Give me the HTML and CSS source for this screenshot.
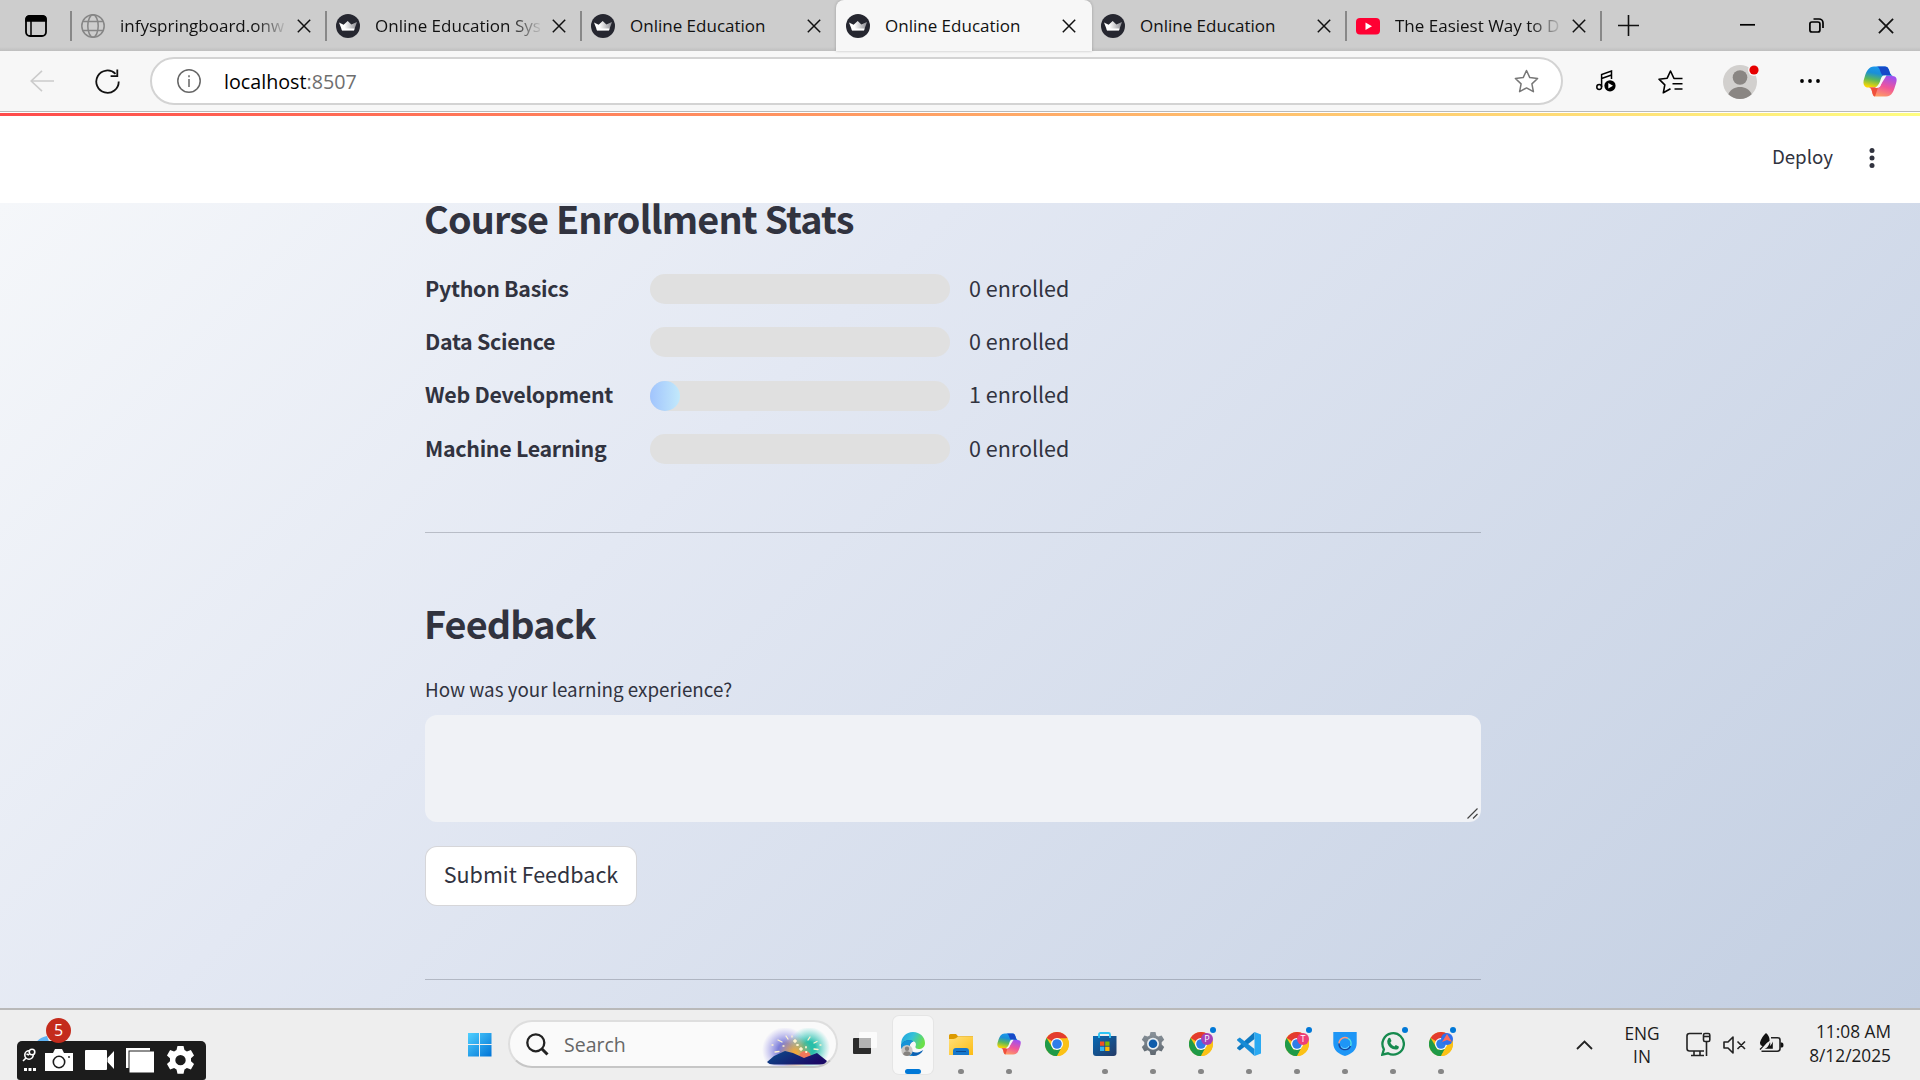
FILE: index.html
```html
<!DOCTYPE html>
<html lang="en">
<head>
<meta charset="utf-8">
<title>Online Education</title>
<link rel="stylesheet" href="styles.css">
</head>
<body>
<svg class="defs" aria-hidden="true">
  <defs>
    <linearGradient id="gBlue" x1="0" y1="0" x2="1" y2="1"><stop offset="0" stop-color="#4fd0ff"/><stop offset="1" stop-color="#0073d6"/></linearGradient>
    <linearGradient id="gCopA" x1="0.6" y1="0" x2="0.3" y2="1"><stop offset="0" stop-color="#1b9af0"/><stop offset=".35" stop-color="#1a8fd8"/><stop offset=".65" stop-color="#5cb85a"/><stop offset="1" stop-color="#ffd800"/></linearGradient>
    <linearGradient id="gCopB" x1="0.7" y1="0" x2="0.3" y2="1"><stop offset="0" stop-color="#a050f0"/><stop offset=".5" stop-color="#f0559a"/><stop offset="1" stop-color="#ffa060"/></linearGradient>
    <linearGradient id="gEdge" x1="0" y1="0" x2="1" y2=".4"><stop offset="0" stop-color="#1d9fe0"/><stop offset=".5" stop-color="#35c1d8"/><stop offset="1" stop-color="#6be04a"/></linearGradient>
    <linearGradient id="gFold" x1="0" y1="0" x2="1" y2="1"><stop offset="0" stop-color="#ffe07a"/><stop offset="1" stop-color="#fdbc14"/></linearGradient>
    <linearGradient id="gStore" x1="0" y1="0" x2="1" y2="1"><stop offset="0" stop-color="#0669b5"/><stop offset="1" stop-color="#243a66"/></linearGradient>
    <linearGradient id="gMount" x1="0" y1="0" x2="1" y2=".4"><stop offset="0" stop-color="#0b4d8c"/><stop offset="1" stop-color="#1a0a66"/></linearGradient>
    <linearGradient id="gGear" x1="0" y1="0" x2="0" y2="1"><stop offset="0" stop-color="#8a939b"/><stop offset="1" stop-color="#5f6870"/></linearGradient>
    <radialGradient id="gGlowA"><stop offset=".3" stop-color="#5b5fd0" stop-opacity=".8"/><stop offset="1" stop-color="#8a80e8" stop-opacity="0"/></radialGradient>
    <radialGradient id="gGlowB"><stop offset=".3" stop-color="#12b8a0" stop-opacity=".9"/><stop offset="1" stop-color="#30c8c0" stop-opacity="0"/></radialGradient>
    <radialGradient id="gGlowC"><stop offset=".1" stop-color="#f0a83c"/><stop offset="1" stop-color="#e8a850" stop-opacity="0"/></radialGradient>
    <linearGradient id="gCrown"><stop offset=".3" stop-color="#fff"/><stop offset="1" stop-color="#8d8d93"/></linearGradient>
  </defs>
  <symbol id="crown" viewBox="0 0 24 24"><circle cx="12" cy="12" r="12" fill="#262730"/><path d="M3 8.4 7.6 10.8 11.7 7 15.4 10.6 21 8 18 16.2H6z" fill="url(#gCrown)"/><path d="M5.6 14.5 18.6 14.5 18 16.4H6z" fill="#fff"/></symbol>
  <symbol id="close" viewBox="0 0 14 14"><path d="M.8.8 13.2 13.2M13.2.8.8 13.2" fill="none" stroke="#111" stroke-width="1.5"/></symbol>
  <symbol id="copilot" viewBox="0 0 34 30"><path d="M11 0H22C25 0 26 3 26.800 6 27.500 8.500 29 9 31 9H22L15 21H9C6 21 4 21.500 2 20 0 18 0 15 1.500 11 3.500 4 6 0 11 0z" fill="url(#gCopA)"/><path d="M17 0H22C25 0 26 3 26.800 6 27.400 8.200 28.500 9 30 9H21C19 9 18 7 17 4 16.500 2 15.500 0 13 0z" fill="#1649c8"/><path d="M8 21H15C16.500 21 17.500 20 18 18L21 9.500H29C33.500 9.500 34.500 12 33 17 30.500 25 29 30 23 30H13C10.500 30 9.500 28 9 25 8.500 22.500 8 21.500 6 21z" fill="url(#gCopB)"/><path d="M8 21H15L12 30C10.500 30 9.500 28 9 25 8.500 22.500 8 21.500 6 21z" fill="#f0503c"/><path d="M20.500 9H23.500L18.500 17C16.500 20.500 15.500 21.500 13.500 21.500H12C14 20 16 18 17 15 18 12 18.500 9.500 20.500 9z" fill="#f7f7f7"/></symbol>
  <symbol id="chrome" viewBox="0 0 24 24"><circle cx="12" cy="12" r="12" fill="#fbc116"/><path d="M12 12 1.600 6A12 12 0 0 1 22.400 6z" fill="#e33b2e"/><path d="M1.600 6 9.500 19 12.500 24A12 12 0 0 1 1.600 6z" fill="#1f9a48"/><path d="M12 12 17 15 12 24A12 12 0 0 1 7 22.900z" fill="#1f9a48"/><path d="M12 6.300H22.500A12 12 0 0 1 12 24L17 15z" fill="#fbc116"/><circle cx="12" cy="12" r="6" fill="#fff"/><circle cx="12" cy="12" r="4.800" fill="#2f7de9"/></symbol>
  <symbol id="gear" viewBox="0 0 24 24"><path fill-rule="evenodd" d="M9.500 0h5l.8 3.400 2 1.100 3.300-1.100 2.600 4.400-2.500 2.400v2.400l2.500 2.300-2.600 4.500-3.300-1.100-2 1.200-.8 3.500h-5l-.8-3.500-2-1.200-3.300 1.100L.8 14.900l2.500-2.300v-2.400L.8 7.800l2.600-4.400 3.300 1.100 2-1.100zM12 7.400a4.300 4.300 0 1 0 0 8.600 4.300 4.300 0 0 0 0-8.600z"/></symbol>
</svg>

<div class="screen">
  <header class="tabstrip">
    <div class="tab-menu"><svg width="22" height="22" viewBox="0 0 22 22"><rect x="1" y="1" width="20" height="20" rx="4" fill="none" stroke="#000" stroke-width="1.800"/><path d="M1 6V4a3 3 0 0 1 3-3h14a3 3 0 0 1 3 3v2z" stroke="#000" stroke-width="1.500"/><path d="M6 6v15" stroke="#000" stroke-width="1.500"/></svg></div>
    <div class="tab"><svg class="fav" viewBox="0 0 24 24" fill="none" stroke="#868686" stroke-width="1.500"><circle cx="12" cy="12" r="11.200"/><ellipse cx="12" cy="12" rx="5.200" ry="11.200"/><path d="M2 7.500h20M2 16.500h20"/></svg><span class="title fade">infyspringboard.onw</span><svg class="x"><use href="#close"/></svg></div>
    <div class="tab"><svg class="fav"><use href="#crown"/></svg><span class="title fade">Online Education Sys</span><svg class="x"><use href="#close"/></svg></div>
    <div class="tab"><svg class="fav"><use href="#crown"/></svg><span class="title">Online Education</span><svg class="x"><use href="#close"/></svg></div>
    <div class="tab active"><svg class="fav"><use href="#crown"/></svg><span class="title">Online Education</span><svg class="x"><use href="#close"/></svg></div>
    <div class="tab first-after"><svg class="fav"><use href="#crown"/></svg><span class="title">Online Education</span><svg class="x"><use href="#close"/></svg></div>
    <div class="tab last-tab"><svg class="fav" viewBox="0 0 24 24"><rect y="4" width="24" height="16.500" rx="4" fill="#ff0033"/><path d="M9.500 8.500 16 12.200 9.500 16z" fill="#fff"/></svg><span class="title fade">The Easiest Way to D</span><svg class="x"><use href="#close"/></svg></div>
    <div class="new-tab"><svg width="21" height="21" viewBox="0 0 21 21"><path d="M10.500 0v21M0 10.500h21" stroke="#111" stroke-width="1.600"/></svg></div>
    <div class="window-controls">
      <svg width="15" height="15" viewBox="0 0 15 15"><path d="M0 6.800h15" stroke="#000" stroke-width="1.700"/></svg>
      <svg width="15" height="15" viewBox="0 0 15 15" fill="none" stroke="#000" stroke-width="1.700"><rect x=".9" y="4" width="10" height="10" rx="2"/><path d="M4.500 1H10a4 4 0 0 1 4 4v5"/></svg>
      <svg width="16" height="16"><use href="#close"/></svg>
    </div>
  </header>

  <div class="toolbar">
    <svg class="back" width="24" height="22" viewBox="0 0 24 22" fill="none" stroke="#cbcbcb" stroke-width="1.600"><path d="M24 11H1M12 .8 1.200 11 12 21.200"/></svg>
    <svg class="reload" width="25" height="25" viewBox="0 0 25 25" fill="none" stroke="#111" stroke-width="1.800"><path d="M20.500 4.800A11.200 11.200 0 1 0 23.700 12.500M22.300 .5V7.200H15.600"/></svg>
    <div class="address">
      <svg width="24" height="24" viewBox="0 0 24 24" fill="none" stroke="#666" stroke-width="1.500"><circle cx="12" cy="12" r="11.200"/><path d="M12 10v8M12 6.200v2"/></svg>
      <span class="url">localhost<span class="port">:8507</span></span>
      <svg class="star" width="25" height="25" viewBox="0 0 25 25" fill="none" stroke="#777" stroke-width="1.500" stroke-linejoin="round"><path d="M12.500 1.500 15.800 8.600 23.600 9.500 17.900 14.900 19.400 22.700 12.500 18.900 5.600 22.700 7.100 14.900 1.400 9.500 9.200 8.600z"/></svg>
    </div>
    <div class="tools">
      <svg width="20" height="22" viewBox="0 0 20 22" fill="none" stroke="#000" stroke-width="1.500"><circle cx="3.200" cy="17" r="2.400"/><path d="M5.600 17V4.500L15.500 1v8M5.600 8.500 15.500 5"/><circle cx="14" cy="15.800" r="5.600" fill="#000" stroke="none"/><path d="M12.300 13 17 15.800 12.300 18.600z" fill="#fff" stroke="none"/></svg>
      <svg width="25" height="25" viewBox="0 0 25 25" fill="none" stroke="#000" stroke-width="1.600" stroke-linejoin="round"><path d="M24.500 9.500H16L12.500 2 9.200 9.200 1 10.200 6.800 15.800 5.300 23.800 12.500 19.800M14.500 14.800H24.500M16.500 20H24.500"/></svg>
      <svg class="avatar" width="36" height="36" viewBox="0 0 36 36"><circle cx="17" cy="19" r="17" fill="#d2d0ce"/><circle cx="17" cy="14.500" r="7.300" fill="#8a8683"/><path d="M5.300 31.300C7.500 26 12 24 17 24s9.500 2 11.700 7.300A17 17 0 0 1 5.300 31.300z" fill="#8a8683"/><circle cx="31" cy="7" r="6" fill="#f7f7f7"/><circle cx="31" cy="7" r="4.600" fill="#e60000"/></svg>
      <svg class="more" width="20" height="4" viewBox="0 0 20 4" fill="#000"><circle cx="2" cy="2" r="1.900"/><circle cx="10" cy="2" r="1.900"/><circle cx="18" cy="2" r="1.900"/></svg>
      <svg width="34" height="31"><use href="#copilot"/></svg>
    </div>
  </div>

  <div class="app-header">
    <span class="deploy">Deploy</span>
    <svg width="6" height="20" viewBox="0 0 6 20" fill="#31333f"><circle cx="3" cy="2.500" r="2.500"/><circle cx="3" cy="10" r="2.500"/><circle cx="3" cy="17.500" r="2.500"/></svg>
  </div>

  <main class="app">
    <section class="content">
      <h2>Course Enrollment Stats</h2>
      <div class="stats">
        <div class="stat"><strong>Python Basics</strong><div class="bar"></div><span>0 enrolled</span></div>
        <div class="stat"><strong>Data Science</strong><div class="bar"></div><span>0 enrolled</span></div>
        <div class="stat"><strong>Web Development</strong><div class="bar"><div class="fill" style="width:10%"></div></div><span>1 enrolled</span></div>
        <div class="stat"><strong>Machine Learning</strong><div class="bar"></div><span>0 enrolled</span></div>
      </div>
      <hr>
      <h2 class="feedback-title">Feedback</h2>
      <div class="question">How was your learning experience?</div>
      <div class="textarea"><svg width="11" height="11" viewBox="0 0 11 11"><path d="M.5 10.500 10.500.5M6 10.500 10.500 6" stroke="#444" stroke-width="1.200"/></svg></div>
      <button class="submit">Submit Feedback</button>
      <hr class="last">
    </section>
  </main>

  <footer class="taskbar">
    <div class="start-area">
      <svg width="24" height="24" viewBox="0 0 24 24" fill="url(#gBlue)"><path d="M0 0h11v11H0zM12 0h11.500v11H12zM0 12h11v11.500H0zM12 12h11.500v11.500H12z"/></svg>
      <div class="search">
        <svg width="23" height="23" viewBox="0 0 23 23" fill="none" stroke="#222" stroke-width="2.300"><circle cx="9.800" cy="9.800" r="8.500"/><path d="M15.500 15.500 21.500 21.500" stroke-width="3"/></svg>
        <span>Search</span>
        <svg class="doodle" width="68" height="38" viewBox="0 0 68 38"><circle cx="23" cy="22" r="23" fill="url(#gGlowA)"/><circle cx="47" cy="20" r="21" fill="url(#gGlowB)"/><circle cx="33" cy="25" r="17" fill="url(#gGlowC)"/><circle cx="43" cy="29" r="6" fill="#f0785a"/><path d="M5 34 12 28 23 23 31 25 42 30 55 25 65 33Q63 36.500 58 36.500H12Q7 36.500 5 34z" fill="url(#gMount)"/><g stroke="#fff4d0" stroke-width="1.300" stroke-linecap="round"><path d="M13 24l4-.5M16 12l4 2M24 8l2 3M46 12l2-3M52 15l3-1.500M52 21l4 .5M10 17h1M21 18h1M30 8v1M58 17h1"/><path d="M33 12v2M32 13h2M39 20v2M38 21h2M35 17h1M44 19v.5M44 24h.5" stroke-width="1.800"/></g></svg>
      </div>
    </div>
    <div class="apps">
      <div class="app-icon"><svg viewBox="0 0 24 24"><rect y="6" width="18" height="16" rx="1" fill="#2b2b2b"/><rect x="6" width="18" height="16" rx="1" fill="#fcfcfc" opacity=".92"/><rect x="6" y="6" width="12" height="10" fill="#b3b3b3"/></svg></div>
      <div class="app-icon selected"><svg viewBox="0 0 24 24"><path d="M12 0C19 0 24 5 24 11c0 4-3 6-6.500 6-2 0-3.500-1-3-2.500.8-2 .5-4-1.500-5-4-2-10 0-12.800 4C-.5 6 4.500 0 12 0z" fill="url(#gEdge)"/><path d="M.1 13.500C2 8 9 7 12.500 9.500 9 10 8 14 9.500 17.500 11.500 21.500 17 21.500 22.300 18 20 22 16.500 24 12.500 24 5 24 .2 19 .1 13.500z" fill="#0b62b4"/><path d="M.1 13.500C2 8 9 7 12.500 9.500 7 10.500 7 19 11.500 24 5 23.500.2 19 .1 13.500z" fill="#1593d8"/><circle cx="6" cy="18.500" r="5.600" fill="#c9c7c5"/><circle cx="6" cy="16.800" r="2.200" fill="#85817e"/><path d="M2 22.300c.8-4 7.200-4 8 0a5.600 5.600 0 0 1-8 0z" fill="#85817e"/></svg><i class="pill"></i></div>
      <div class="app-icon"><svg viewBox="0 0 24 24"><path d="M0 3.500Q0 2 1.500 2H7l2 2.200h15V9H0z" fill="#dc9a00"/><path d="M0 7Q7 7.500 9 4.500H24V23H0z" fill="url(#gFold)"/><path d="M4 23v-4q0-3 3-3h10q3 0 3 3v4z" fill="#1577cc"/><path d="M7 19.500h10" stroke="#0a4c94"/></svg><i></i></div>
      <div class="app-icon"><svg><use href="#copilot"/></svg><i></i></div>
      <div class="app-icon"><svg><use href="#chrome"/></svg></div>
      <div class="app-icon"><svg viewBox="0 0 24 24"><path d="M0 4h23.500v17q0 3-3 3H3q-3 0-3-3z" fill="url(#gStore)"/><path d="M6 6V2.500Q6 1 7.500 1h8Q17 1 17 2.500V6" fill="none" stroke="#2cc4f4" stroke-width="1.800"/><path d="M7 9.500h4.300v4.300H7z" fill="#f25022"/><path d="M12.200 9.500h4.300v4.300h-4.300z" fill="#7fba00"/><path d="M7 14.700h4.300V19H7z" fill="#35b5ee"/><path d="M12.200 14.700h4.300V19h-4.300z" fill="#ffb900"/></svg><i></i></div>
      <div class="app-icon"><svg viewBox="0 0 24 24"><use href="#gear" fill="url(#gGear)"/><circle cx="12" cy="11.800" r="6" fill="#e8eef2"/><circle cx="12" cy="11.800" r="4.300" fill="#0d5cab"/></svg><i></i></div>
      <div class="app-icon"><svg><use href="#chrome"/></svg><b class="badge purple">P</b><em></em><i></i></div>
      <div class="app-icon"><svg viewBox="0 0 24 24"><path d="M17.500 0V7L2.800 18.500.3 16.800Q-.3 16 .5 15.200z" fill="#0d78c0"/><path d="M17.500 24V17L2.800 5.500.3 7.200Q-.3 8 .5 8.800z" fill="#168bd6"/><path d="M17.500 0 24 2.500V21.500L17.500 24z" fill="#29a9f2"/></svg><i></i></div>
      <div class="app-icon"><svg><use href="#chrome"/></svg><b class="badge pink">T</b><em></em><i></i></div>
      <div class="app-icon"><svg viewBox="0 0 24 24"><path d="M.3 0h23.400v11.500C23.700 18 18 22.500 12 24 6 22.500.3 18 .3 11.500z" fill="#1e96f6"/><g fill="none" stroke-width="1.400"><path d="M6 11.500a6 6 0 0 1 9-5.200" stroke="#ff9a7a"/><path d="M15 6.300a6 6 0 0 1 2.500 7.700" stroke="#55e6e0"/><path d="M17.500 14A6 6 0 0 1 6 11.500" stroke="#17459c"/><path d="M8 14.500a4.600 4.600 0 0 0 8-.5" stroke="#6cd4ff" stroke-width="1"/></g></svg><i></i></div>
      <div class="app-icon"><svg viewBox="0 0 24 24"><path d="M1.300 22.700 2.900 17.300A10.700 10.700 0 1 1 7 21.300z" fill="none" stroke="#168a4e" stroke-width="2.300"/><path d="M7.200 6.500q1-1.200 2-.4l1.300 3-1.200 1.700q1.400 2.700 4 3.800l1.500-1.600 3 1.400q.5 3-3.300 3.200-6-.6-8-6-.7-3.200.7-5.100z" fill="#168a4e"/></svg><em></em><i></i></div>
      <div class="app-icon"><svg><use href="#chrome"/></svg><b class="badge blue"><svg viewBox="0 0 12 12"><path d="M6 1 11 9 6 7 1 9z" fill="#ff6a5a"/></svg></b><em></em><i></i></div>
    </div>
    <div class="tray">
      <svg width="17" height="10" viewBox="0 0 17 10"><path d="M1 9 8.500 1.500 16 9" fill="none" stroke="#222" stroke-width="1.800"/></svg>
      <div class="lang"><span>ENG</span><span>IN</span></div>
      <div class="status">
        <svg width="25" height="25" viewBox="0 0 25 25" fill="none" stroke="#222" stroke-width="1.600"><path d="M16 1.500H3.500Q1 1.500 1 4V16.500Q1 19 3.500 19H18M8 19v4M14 19v4M5 23.500H18M20.500 10V24"/><rect x="17.500" y="1.500" width="6.300" height="8" rx="1.500"/><path d="M18 4.500h5"/></svg>
        <svg width="24" height="18" viewBox="0 0 24 18" fill="none" stroke="#222" stroke-width="1.600" stroke-linejoin="round"><path d="M1 6H5L10 1V17L5 12H1zM14.500 5.500 22 13M22 5.500 14.500 13"/></svg>
        <svg class="battery" width="25" height="20" viewBox="0 0 25 20"><path d="M12 4.800H18.500Q21 4.800 21 7V15.500Q21 18.200 18.300 18.200H2.500" fill="none" stroke="#222" stroke-width="1.600"/><path d="M21.500 9.500H23Q24.500 9.500 24.500 12T23 14.500H21.500zM1 9.500Q2.500 4 7 0 11 3.500 10.500 8 8 9 5.500 12.500L1.500 17 .5 16 3.500 13.200Q.8 12.500 1 9.500z" fill="#111"/><path d="M5.500 15.800Q9.500 14.500 11 9 11.800 11 10.800 13.200 13 11.500 13.800 8.500V15.800z" fill="#111"/></svg>
      </div>
      <div class="clock"><span>11:08 AM</span><span>8/12/2025</span></div>
    </div>
    <div class="widget"><svg width="30" height="16" viewBox="0 0 30 16"><path d="M2 16Q3 4 15 2L20 16z" fill="#5fb4f5"/></svg></div>
    <div class="recorder">
      <svg width="15" height="24" viewBox="0 0 15 24" fill="none" stroke="#fff" stroke-width="1.600"><circle cx="7" cy="7" r="4.200"/><circle cx="10" cy="4" r="2.800" fill="#1c1c1c"/><path d="M1 13 4 10M7 7 4.500 6"/><path d="M2 21.500h12" stroke-width="3" stroke-dasharray="3 1.500"/></svg>
      <svg width="28" height="22" viewBox="0 0 28 22"><path d="M0 4H8L10 0H17L19 4H28V22H0z" fill="#fff"/><circle cx="14" cy="13" r="5.700" fill="none" stroke="#1c1c1c" stroke-width="1.600"/><circle cx="24" cy="8" r=".9" fill="#1c1c1c"/></svg>
      <svg width="29" height="20" viewBox="0 0 29 20"><path d="M0 1Q0 0 1 0H21Q22 0 22 1V19Q22 20 21 20H1Q0 20 0 19zM22.500 8 29 1V19L22.500 12z" fill="#fff"/></svg>
      <svg width="28" height="25" viewBox="0 0 28 25" fill="#fff"><path d="M0 0H24V2.500H2.500V20H0zM3.500 3.500H28V24.500H3.500z"/></svg>
      <svg width="29" height="29" fill="#fff"><use href="#gear"/></svg>
    </div>
    <b class="count">5</b>
  </footer>
</div>
</body>
</html>
```
FILE: styles.css
```css
* { box-sizing: border-box; }
body { margin: 0; font-family: "Open Sans", sans-serif; color: #1b1b1b; }
svg { display: block; flex: none; }
.defs { position: absolute; width: 0; height: 0; }
.screen { width: 1920px; height: 1080px; overflow: hidden; display: flex; flex-direction: column; }

.tabstrip { height: 51px; flex: none; display: flex; background: linear-gradient(#cdcdcd 47px, #bfbfbf); }
.tab-menu { width: 71px; padding: 15px 0 0 25px; }
.tab { width: 255px; height: 51px; padding: 0 15px 0 10px; display: flex; align-items: center; position: relative; }
.tab::before, .last-tab::after { content: ""; position: absolute; left: -1px; top: 11px; width: 2px; height: 30px; background: #888; }
.last-tab::after { left: auto; right: -1px; }
.tab.active { width: 256px; margin-right: -1px; background: #f7f7f7; border-radius: 8px 8px 0 0; box-shadow: 0 0 3px rgba(0,0,0,.25); }
.tab.active::before, .tab.first-after::before { display: none; }
.fav { width: 24px; height: 24px; }
.title { margin-left: 15px; width: 166px; flex: none; font-size: 17px; color: #111; white-space: nowrap; line-height: 24px; }
.title.fade { -webkit-mask-image: linear-gradient(90deg, #000 135px, transparent 168px); mask-image: linear-gradient(90deg, #000 135px, transparent 168px); }
.x { width: 14px; height: 14px; margin-left: 11px; }
.new-tab { padding: 15px 0 0 17px; width: 139px; }
.window-controls { display: flex; gap: 54px; align-items: center; }

.toolbar { height: 61px; flex: none; background: #f7f7f7; border-bottom: 1px solid #b9b9b9; display: flex; align-items: center; padding: 0 23px 0 30px; }
.reload { margin-left: 41px; }
.address { margin-left: 30px; width: 1413px; height: 48px; border: 2px solid #d3d3d3; border-radius: 24px; background: #fff; display: flex; align-items: center; padding: 0 22px 0 25px; }
.url { margin-left: 23px; font-size: 19.700px; color: #000; }
.port { color: #6e6e6e; }
.star { margin-left: auto; }
.tools { margin-left: auto; display: flex; align-items: center; justify-content: space-between; width: 301px; }
.avatar { margin: 0 1px 0 -1px; }
.more { margin: 0 2px 0 -2px; }

.app-header { height: 91px; flex: none; background: linear-gradient(90deg, #ff4b4b, #fffd80) 0 1px / 100% 3px no-repeat #fff; display: flex; align-items: center; justify-content: flex-end; gap: 36px; padding-right: 45px; font: 18.7px/24px "Noto Sans CJK SC", sans-serif; color: #31333f; }
.deploy { padding-bottom: 3px; }

.app { height: 805px; flex: none; background: linear-gradient(135deg, #f5f7fa, #e3e8f3 35%, #c3cfe2); font-family: "Noto Sans CJK SC", sans-serif; color: #31333f; padding-left: 425px; }
.content { width: 1056px; display: flex; flex-direction: column; align-items: flex-start; padding-top: 1px; }
h2 { margin: -11px 0 0 -1px; font-size: 37.8px; line-height: 50px; font-weight: 600; letter-spacing: -.86px; }
.stats { margin-top: 31px; display: flex; flex-direction: column; gap: 23.400px; }
.stat { display: flex; align-items: center; height: 30px; font-size: 21.5px; }
.stat strong { width: 225px; padding-bottom: 4px; font-weight: 600; font-size: 21.4px; letter-spacing: -.3px; }
.stat span { padding-bottom: 4px; }
.bar { width: 300px; height: 30px; border-radius: 15px; background: #e0e0e0; margin-right: 19px; }
.fill { height: 30px; border-radius: 15px; background: linear-gradient(90deg, #a1c4fd, #c2e9fb); }
hr { width: 100%; height: 1px; border: 0; margin: 67.800px 0 0; background: rgba(49,51,63,.25); }
.feedback-title { margin-top: 65px; }
.question { margin-top: 29px; font-size: 18.8px; line-height: 24px; }
.textarea { margin-top: 14px; width: 100%; height: 107px; border-radius: 12px; background: #f0f2f6; display: flex; align-items: flex-end; justify-content: flex-end; padding: 3px; }
.submit { margin-top: 24px; width: 212px; height: 60px; border: 1px solid rgba(49,51,63,.2); border-radius: 12px; background: #fff; color: #31333f; font: 21.5px/30px "Noto Sans CJK SC", sans-serif; padding: 0 0 3px; }
hr.last { margin-top: 73px; }

.taskbar { height: 72px; flex: none; background: #eee; border-top: 2px solid #b9b9b9; display: flex; align-items: center; position: relative; padding: 0 0 1px 468px; }
.start-area { display: flex; align-items: center; gap: 16px; }
.search { width: 330px; height: 48px; border: 2px solid #dedede; border-bottom-color: #c6c6c6; border-radius: 24px; background: #fafafa; display: flex; align-items: center; padding-left: 16px; font-size: 19.5px; color: #666; margin-top: -1px; }
.search span { margin-left: 15px; }
.doodle { margin-left: auto; margin-right: 6px; align-self: flex-end; }
.apps { display: flex; margin-left: 3px; }
.app-icon { width: 48px; height: 58px; display: flex; align-items: center; justify-content: center; position: relative; }
.app-icon > svg { width: 24px; height: 24px; margin-bottom: 1px; }
.app-icon.selected { width: 40px; margin: 0 4px; background: #f8f8f8; border-radius: 6px; box-shadow: 0 0 0 1px #e5e5e5; }
.app-icon i { position: absolute; left: 21px; bottom: 0; width: 6px; height: 5px; border-radius: 3px; background: #868686; }
.app-icon i.pill { left: 12px; width: 16px; background: #0078d7; }
.app-icon em { position: absolute; left: 33px; top: 11px; width: 6px; height: 6px; border-radius: 3px; background: #0078d7; }
.badge { position: absolute; left: 24px; top: 17px; width: 12px; height: 12px; border-radius: 6px; color: #fff; font: 9px/12px "Open Sans", sans-serif; text-align: center; }
.purple { background: #a541b8; }
.pink { background: #ee3e78; }
.blue { background: #2e6fee; }
.tray { margin-left: auto; display: flex; align-items: center; padding-right: 29px; font-size: 17.3px; line-height: 23px; }
.lang { display: flex; flex-direction: column; align-items: center; width: 36px; margin-left: 31px; }
.status { display: flex; align-items: center; gap: 12px; margin: 0 0 0 26px; }
.battery { margin-bottom: 3px; }
.clock { width: 107px; display: flex; flex-direction: column; align-items: flex-end; line-height: 24px; padding-bottom: 1px; }
.widget { position: absolute; left: 32px; top: 24px; }
.recorder { position: absolute; left: 17px; top: 31px; width: 189px; height: 39px; border-radius: 5px 5px 3px 3px; background: #1c1c1c; display: flex; align-items: center; gap: 12px; padding: 0 0 1px 5px; }
.recorder svg:first-child { margin-right: -4px; }
.count { position: absolute; left: 46px; top: 8px; width: 25px; height: 25px; border-radius: 50%; background: #c42b1c; color: #fff; font: 16px/25px "Open Sans", sans-serif; text-align: center; }
```
